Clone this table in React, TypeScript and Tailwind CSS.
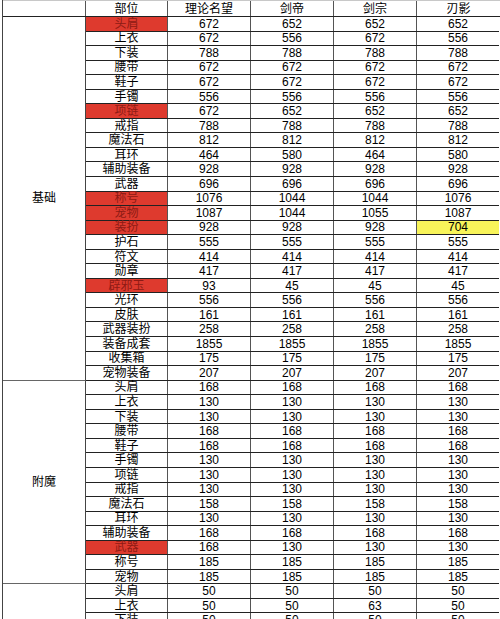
const groups = [
  {
    name: "基础",
    rows: [
      ["头肩", "672", "652", "652", "652", "red"],
      ["上衣", "672", "556", "672", "556"],
      ["下装", "788", "788", "788", "788"],
      ["腰带", "672", "672", "672", "672"],
      ["鞋子", "672", "672", "672", "672"],
      ["手镯", "556", "556", "556", "556"],
      ["项链", "672", "652", "652", "652", "red"],
      ["戒指", "788", "788", "788", "788"],
      ["魔法石", "812", "812", "812", "812"],
      ["耳环", "464", "580", "464", "580"],
      ["辅助装备", "928", "928", "928", "928"],
      ["武器", "696", "696", "696", "696"],
      ["称号", "1076", "1044", "1044", "1076", "red"],
      ["宠物", "1087", "1044", "1055", "1087", "red"],
      ["装扮", "928", "928", "928", "704", "red", "yellow"],
      ["护石", "555", "555", "555", "555"],
      ["符文", "414", "414", "414", "414"],
      ["勋章", "417", "417", "417", "417"],
      ["辟邪玉", "93", "45", "45", "45", "red"],
      ["光环", "556", "556", "556", "556"],
      ["皮肤", "161", "161", "161", "161"],
      ["武器装扮", "258", "258", "258", "258"],
      ["装备成套", "1855", "1855", "1855", "1855"],
      ["收集箱", "175", "175", "175", "175"],
      ["宠物装备", "207", "207", "207", "207"],
    ],
  },
  {
    name: "附魔",
    rows: [
      ["头肩", "168", "168", "168", "168"],
      ["上衣", "130", "130", "130", "130"],
      ["下装", "130", "130", "130", "130"],
      ["腰带", "168", "168", "168", "168"],
      ["鞋子", "168", "168", "168", "168"],
      ["手镯", "130", "130", "130", "130"],
      ["项链", "130", "130", "130", "130"],
      ["戒指", "130", "130", "130", "130"],
      ["魔法石", "158", "158", "158", "158"],
      ["耳环", "130", "130", "130", "130"],
      ["辅助装备", "168", "168", "168", "168"],
      ["武器", "168", "130", "130", "130", "red"],
      ["称号", "185", "185", "185", "185"],
      ["宠物", "185", "185", "185", "185"],
    ],
  },
  {
    name: "",
    rows: [
      ["头肩", "50", "50", "50", "50"],
      ["上衣", "50", "50", "63", "50"],
      ["下装", "50", "50", "50", "50"],
    ],
  },
];

const cell = "flex items-center justify-center border-r border-[#555] leading-none";

const App = () => {
  return (
    <div
      className="h-[619px] w-[500px] overflow-hidden bg-white pl-[2px] text-[12px] text-black"
      style={{ fontFamily: '"Liberation Sans", "Noto Sans CJK SC", sans-serif' }}
    >
      <div className="border-l border-[#444]">
        {/* header */}
        <div className="flex h-[17px] border-t border-b border-t-[#c8c8c8] border-b-[#222]">
          <div className={`${cell} w-[83px]`} />
          <div className={`${cell} w-[82px]`}>部位</div>
          <div className={`${cell} w-[83px]`}>理论名望</div>
          <div className={`${cell} w-[83px]`}>剑帝</div>
          <div className={`${cell} w-[83px]`}>剑宗</div>
          <div className={`${cell} w-[83px] border-r-0`}>刃影</div>
        </div>

        {groups.map((group, gi) => (
          <div key={gi} className="flex">
            <div className="flex w-[83px] items-center justify-center border-r border-b border-r-[#444] border-b-[#666]">
              {group.name}
            </div>
            <div className="flex flex-col">
              {group.rows.map((row, ri) => {
                const red = row[5] === "red";
                const yellow = row[6] === "yellow";
                return (
                  <div key={ri} className="flex h-[14.56px] border-b border-[#222]">
                    <div
                      className={`${cell} w-[82px] ${
                        red ? "bg-[#de3a2e] text-[#8e1a14]" : ""
                      }`}
                    >
                      {row[0]}
                    </div>
                    <div className={`${cell} w-[83px]`}>{row[1]}</div>
                    <div className={`${cell} w-[83px]`}>{row[2]}</div>
                    <div className={`${cell} w-[83px]`}>{row[3]}</div>
                    <div
                      className={`${cell} w-[82px] border-r-0 ${
                        yellow ? "bg-[#f8f45a]" : ""
                      }`}
                    >
                      {row[4]}
                    </div>
                  </div>
                );
              })}
            </div>
          </div>
        ))}
      </div>
    </div>
  );
};

export default App;
